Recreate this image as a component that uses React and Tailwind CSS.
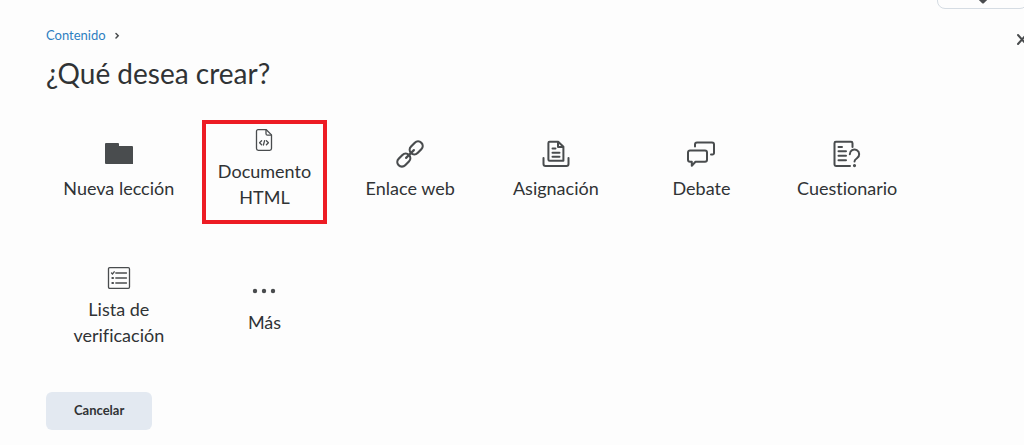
import React from "react"

function FolderIcon() {
    return (
        <svg className="h-[30px] w-[30px]" viewBox="0 0 30 30" fill="#494c4e" aria-hidden="true">
            <path d="M2 4h12a1 1 0 0 1 1 1v2h13a1 1 0 0 1 1 1v17H2a1 1 0 0 1-1-1V5a1 1 0 0 1 1-1z" />
        </svg>
    )
}

function HtmlFileIcon() {
    return (
        <svg className="h-6 w-6" viewBox="0 0 24 24" fill="none" stroke="#494c4e" strokeWidth="1.3" strokeLinejoin="round" strokeLinecap="round" aria-hidden="true">
            <path d="M6 1.7h8.3l5.2 5.2v13.6a1.8 1.8 0 0 1-1.8 1.8H6.3a1.8 1.8 0 0 1-1.8-1.8V3.2A1.5 1.5 0 0 1 6 1.7z" />
            <path d="M14 2v3.7a1.5 1.5 0 0 0 1.5 1.5h3.7" />
            <path d="M9.6 12.8l-2 2 2 2M14.4 12.8l2 2-2 2M12.6 12.6l-1.2 4.4" />
        </svg>
    )
}

function LinkIcon() {
    return (
        <svg className="h-[30px] w-[30px]" viewBox="0 0 30 30" fill="none" stroke="#494c4e" strokeWidth="2.2" strokeLinecap="round" aria-hidden="true">
            <g transform="rotate(-45 15 15)">
                <rect x="-1" y="10.4" width="14.5" height="9.2" rx="4.6" />
                <rect x="16.5" y="10.4" width="14.5" height="9.2" rx="4.6" />
                <path d="M9.5 15h11" />
            </g>
        </svg>
    )
}

function AssignmentIcon() {
    return (
        <svg className="h-[30px] w-[30px]" viewBox="0 0 30 30" fill="none" stroke="#494c4e" strokeWidth="2" strokeLinecap="round" strokeLinejoin="round" aria-hidden="true">
            <path d="M8.6 2.8h8.6l5.2 5v14H8.6a1.2 1.2 0 0 1-1.2-1.2V4a1.2 1.2 0 0 1 1.2-1.2z" />
            <path d="M17 3v5h5" />
            <path d="M11.5 9.5h3M11.5 13.7h7M11.5 17.7h7" />
            <path d="M2.5 19v6a2 2 0 0 0 2 2h21a2 2 0 0 0 2-2v-6" />
        </svg>
    )
}

function DiscussionIcon() {
    return (
        <svg className="h-[30px] w-[30px]" viewBox="0 0 30 30" fill="none" stroke="#494c4e" strokeWidth="2" strokeLinecap="round" strokeLinejoin="round" aria-hidden="true">
            <path d="M4 11.4h15a2 2 0 0 1 2 2v7.4a2 2 0 0 1-2 2H9.5l-3.7 4v-4H4a2 2 0 0 1-2-2v-7.4a2 2 0 0 1 2-2z" />
            <path d="M9 7.5v-2a2 2 0 0 1 2-2h15a2 2 0 0 1 2 2v8.5a1.5 1.5 0 0 1-1.5 1.5h-1.5" />
        </svg>
    )
}

function QuizIcon() {
    return (
        <svg className="h-[30px] w-[30px]" viewBox="0 0 30 30" fill="none" stroke="#494c4e" strokeWidth="2" strokeLinecap="round" strokeLinejoin="round" aria-hidden="true">
            <path d="M20.5 8V4.2a1.4 1.4 0 0 0-1.4-1.4H3.9a1.4 1.4 0 0 0-1.4 1.4v21.4A1.4 1.4 0 0 0 3.9 27H18" />
            <path d="M6.5 8h3.5M6.5 12.3h7.5M6.5 16.7h7.5M6.5 21.2h7.5" />
            <path d="M17.8 15.2a4.7 4.7 0 1 1 7.2 4c-1.7 1.1-2.5 1.6-2.5 3.3" />
            <circle cx="22.5" cy="26.6" r="0.6" fill="#494c4e" />
        </svg>
    )
}

function ChecklistIcon() {
    return (
        <svg className="h-6 w-6" viewBox="0 0 24 24" fill="none" stroke="#494c4e" strokeWidth="1.3" strokeLinecap="round" aria-hidden="true">
            <rect x="1.5" y="1.7" width="21" height="20.6" rx="1.2" />
            <path d="M8.8 7h10.7M8.8 12h10.7M8.8 17h10.7" />
            <path d="M4.5 7l1 1 1.7-2.2" />
            <path d="M5.4 12h.6M5.4 17h.6" strokeWidth="2.2" />
        </svg>
    )
}

function MoreIcon() {
    return (
        <svg className="h-6 w-6" viewBox="0 0 24 24" fill="#494c4e" aria-hidden="true">
            <circle cx="3" cy="12" r="2.2" />
            <circle cx="12" cy="12" r="2.2" />
            <circle cx="21" cy="12" r="2.2" />
        </svg>
    )
}

const items = [
    { label: "Nueva lección", icon: FolderIcon },
    { label: "Documento HTML", icon: HtmlFileIcon, marked: true },
    { label: "Enlace web", icon: LinkIcon },
    { label: "Asignación", icon: AssignmentIcon },
    { label: "Debate", icon: DiscussionIcon },
    { label: "Cuestionario", icon: QuizIcon },
    { label: "Lista de verificación", icon: ChecklistIcon },
    { label: "Más", icon: MoreIcon },
]

function Tile({ label, icon: Icon, marked }) {
    return (
        <div className="flex h-[137px] items-center justify-center">
            <button type="button" className={"flex w-[125px] cursor-pointer flex-col items-center gap-1.5 text-[18px] leading-[26px] " + (marked ? "mt-1 border-4 border-[#ed1c24] pt-1 pb-2.5" : "")}>
                <Icon />
                <span>{label}</span>
            </button>
        </div>
    )
}

function App() {
    return (
        <div className="min-h-screen overflow-hidden bg-[#fdfdfd] font-['Lato',sans-serif] text-[#303335] [font-variant-ligatures:none]">
            <div className="flex h-[9px] items-end justify-end">
                <button type="button" aria-label="Abrir menú" className="-mr-1 flex h-[38px] w-[91px] shrink-0 items-end justify-center rounded-lg border border-[#d5dce3]">
                    <svg className="h-3 w-3" viewBox="0 0 12 12" fill="none" stroke="#494c4e" strokeWidth="3" strokeLinecap="round" strokeLinejoin="round" aria-hidden="true">
                        <path d="M2 2l4 4 4-4" />
                    </svg>
                </button>
            </div>
            <header className="flex items-start justify-between pt-4 pl-[46px]">
                <div>
                    <nav className="flex items-center gap-2 text-[13px] leading-5">
                        <a href="#" className="text-[#2d7fc1]">Contenido</a>
                        <svg className="h-2 w-2" viewBox="0 0 8 8" fill="none" stroke="#494c4e" strokeWidth="1.5" strokeLinecap="round" aria-hidden="true">
                            <path d="M2 2.5L4.2 4.7 2 7" />
                        </svg>
                    </nav>
                    <h1 className="mt-2.5 text-[28px] leading-9">¿Qué desea crear?</h1>
                </div>
                <button type="button" aria-label="Cerrar" className="-mr-1 mt-2 cursor-pointer">
                    <svg className="h-3 w-3" viewBox="0 0 12 12" fill="none" stroke="#494c4e" strokeWidth="2" strokeLinecap="round" aria-hidden="true">
                        <path d="M2 2l8 9M10 2l-8 9" />
                    </svg>
                </button>
            </header>
            <main className="mt-2.5 pr-[104px] pl-[46px]">
                <div className="grid grid-cols-6">
                    {items.map((item) => (
                        <Tile key={item.label} {...item} />
                    ))}
                </div>
                <button type="button" className="mt-[17px] h-[38px] cursor-pointer rounded-md bg-[#e3e9f1] px-7 text-[13px] font-bold">Cancelar</button>
            </main>
        </div>
    )
}

export default App
